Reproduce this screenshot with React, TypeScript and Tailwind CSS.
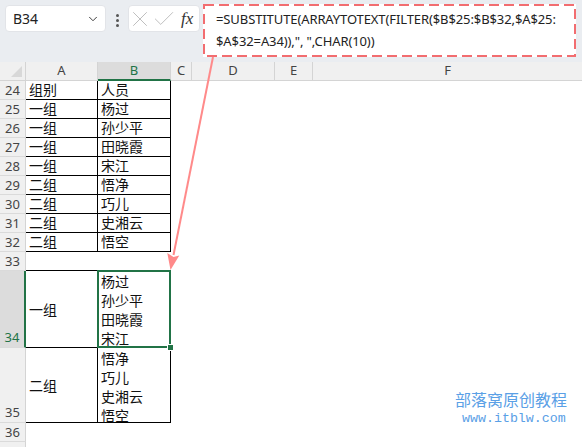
import React from "react";
import { X, Check, ChevronDown } from "lucide-react";

type Row = { n: number; a: string; b: string };
const rows: Row[] = [
  { n: 24, a: "组别", b: "人员" },
  { n: 25, a: "一组", b: "杨过" },
  { n: 26, a: "一组", b: "孙少平" },
  { n: 27, a: "一组", b: "田晓霞" },
  { n: 28, a: "一组", b: "宋江" },
  { n: 29, a: "二组", b: "悟净" },
  { n: 30, a: "二组", b: "巧儿" },
  { n: 31, a: "二组", b: "史湘云" },
  { n: 32, a: "二组", b: "悟空" },
];

function RowHead({ n, selected, bottom }: { n?: number; selected?: boolean; bottom?: boolean }) {
  return (
    <div
      className={
        "flex justify-center border-b border-[#dadada] text-[13px] leading-[19px] font-['Noto_Sans',sans-serif] " +
        (bottom ? "items-end " : "items-center ") +
        (selected
          ? "bg-[#dcdcdc] border-r-2 border-r-[#217346] text-[#217346]"
          : "bg-[#f0f0f0] border-r border-r-[#d4d4d4] text-[#444]")
      }
    >
      {n}
    </div>
  );
}

function Rest() {
  return <div className="col-span-4" />;
}

export default function App() {
  return (
    <div className="relative w-[582px] h-[447px] overflow-hidden bg-white font-['Noto_Sans','Noto_Sans_CJK_SC',sans-serif]">
      {/* formula bar area */}
      <div className="flex items-start h-[62px] bg-[#eaedf1] pt-[5px] pl-[5px]">
        <div className="flex items-center justify-between w-[101px] h-[27px] bg-white rounded-[4px] border border-[#e2e4e8] pl-[7px] pr-[5px]">
          <span className="text-[14px] text-[#222]">B34</span>
          <ChevronDown size={14} strokeWidth={1.6} color="#333" />
        </div>
        <div className="flex flex-col gap-[2px] ml-[10px] mt-[9px]">
          <div className="w-[3px] h-[3px] bg-[#555] rounded-full" />
          <div className="w-[3px] h-[3px] bg-[#555] rounded-full" />
          <div className="w-[3px] h-[3px] bg-[#555] rounded-full" />
        </div>
        <div className="flex items-center w-[72px] h-[27px] ml-[9px] bg-white rounded-[4px] border border-[#e2e4e8]">
          <X size={26} strokeWidth={0.9} color="#bdbdbd" className="-ml-[2px] shrink-0" />
          <Check size={26} strokeWidth={0.9} color="#bdbdbd" className="-ml-[2px] shrink-0" />
          <span className="ml-[4px] text-[17px] italic text-[#333] font-['Liberation_Serif',serif]">fx</span>
        </div>
        <div className="ml-[3px] -mt-[1px] w-[373px] h-[53px] bg-white pt-[4px] pl-[13px] text-[13px] leading-[22px] text-[#222] font-['Noto_Sans',sans-serif] whitespace-nowrap tracking-[-0.1px]">
          =SUBSTITUTE(ARRAYTOTEXT(FILTER($B$25:$B$32,$A$25:
          <br />
          $A$32=A34)),", ",CHAR(10))
        </div>
      </div>

      {/* sheet grid */}
      <div className="grid grid-cols-[26px_72px_73px_21px_83px_38px_1fr] grid-rows-[19px_repeat(10,19px)_77px_75px_19px_19px] text-[14px] text-[#111]">
        {/* column header */}
        <div className="relative bg-[#f0f0f0] border-r border-b border-[#d4d4d4]">
          <div className="absolute right-[3px] bottom-[3px] w-0 h-0 border-l-[11px] border-l-transparent border-b-[11px] border-b-[#d8d8d8]" />
        </div>
        <div className="flex items-center justify-center bg-[#f0f0f0] border-r border-b border-[#d4d4d4] text-[13px] text-[#444]">A</div>
        <div className="flex items-center justify-center bg-[#dcdcdc] border-r border-r-[#d4d4d4] border-b-2 border-b-[#217346] text-[13px] text-[#217346]">B</div>
        <div className="flex items-center justify-center bg-[#f0f0f0] border-r border-b border-[#d4d4d4] text-[13px] text-[#444]">C</div>
        <div className="flex items-center justify-center bg-[#f0f0f0] border-r border-b border-[#d4d4d4] text-[13px] text-[#444]">D</div>
        <div className="flex items-center justify-center bg-[#f0f0f0] border-r border-b border-[#d4d4d4] text-[13px] text-[#444]">E</div>
        <div className="flex items-center justify-center bg-[#f0f0f0] border-b border-[#d4d4d4] text-[13px] text-[#444]">F</div>

        {rows.map((r) => (
          <React.Fragment key={r.n}>
            <RowHead n={r.n} />
            <div className="flex items-end pl-[3px] leading-[19px] border-r border-b border-black">{r.a}</div>
            <div className="flex items-end pl-[3px] leading-[19px] border-r border-b border-black">{r.b}</div>
            <Rest />
          </React.Fragment>
        ))}

        {/* row 33 */}
        <RowHead n={33} />
        <div className="border-b border-black" />
        <div className="border-b border-black" />
        <Rest />

        {/* row 34 */}
        <RowHead n={34} selected bottom />
        <div className="flex items-center pl-[3px] border-r border-b border-black">一组</div>
        <div className="relative pl-[3px] pt-[1px] leading-[19px] border-r border-b border-black">
          <div>杨过</div>
          <div>孙少平</div>
          <div>田晓霞</div>
          <div>宋江</div>
          <div className="absolute -left-[1px] -top-[1px] -right-[1px] -bottom-[1px] border-2 border-[#217346]" />
          <div className="absolute -right-[3px] -bottom-[3px] w-[5px] h-[5px] bg-[#217346] outline outline-1 outline-white" />
        </div>
        <Rest />

        {/* row 35 */}
        <RowHead n={35} bottom />
        <div className="flex items-center pl-[3px] border-r border-b border-black">二组</div>
        <div className="pl-[3px] pt-[1px] leading-[19px] border-r border-b border-black">
          <div>悟净</div>
          <div>巧儿</div>
          <div>史湘云</div>
          <div>悟空</div>
        </div>
        <Rest />

        {/* row 36, 37 */}
        <RowHead n={36} />
        <div />
        <div />
        <Rest />
        <RowHead />
        <div />
        <div />
        <Rest />
      </div>

      {/* annotation overlay */}
      <svg className="absolute left-0 top-0 pointer-events-none" width="582" height="447">
        <rect x="204" y="5" width="371" height="51" fill="none" stroke="#f26d70" strokeWidth="2" strokeDasharray="10 5" />
        <line x1="213" y1="57" x2="173.5" y2="255" stroke="#ff8a8a" strokeWidth="2" />
        <polygon points="170.5,270 167.3,253 173.5,257 179.3,255.5" fill="#ff8a8a" />
      </svg>

      {/* watermark */}
      <div className="absolute left-[455px] top-[389px] text-[16px] leading-[20px] text-[#5aa0e6] font-['Noto_Sans_CJK_SC',sans-serif]">
        部落窝原创教程
      </div>
      <div className="absolute left-[462px] top-[411px] text-[13.3px] leading-[16px] text-[#5aa0e6] font-['Liberation_Mono',monospace]">
        www.itblw.com
      </div>
    </div>
  );
}
